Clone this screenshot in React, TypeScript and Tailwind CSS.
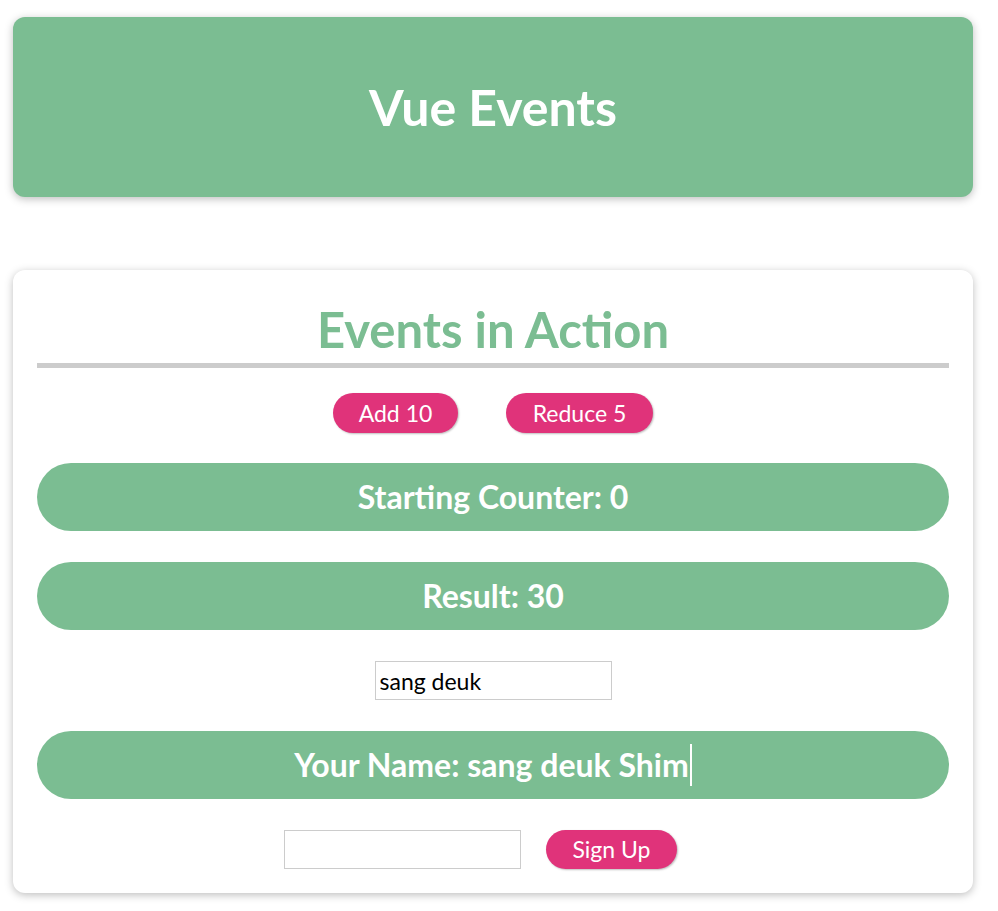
import React from "react";

export default function App() {
  const font = { fontFamily: "Lato, 'Noto Sans', sans-serif" };
  const bar =
    "h-[68px] rounded-full bg-[#7bbd92] text-white font-bold text-[32px] flex items-center justify-center";
  const btn =
    "rounded-[20px] bg-[#e0337a] text-white text-[23px] shadow-[1px_1px_2px_rgba(0,0,0,0.26)]";
  return (
    <div className="min-h-[911px] bg-white pt-[17px] pb-[18px]" style={font}>
      <header className="ml-[13px] mr-[25px] h-[180px] rounded-[12px] bg-[#7bbd92] shadow-[0_2px_8px_rgba(0,0,0,0.26)] flex items-center justify-center">
        <h1 className="text-white font-bold text-[50px] leading-none">Vue Events</h1>
      </header>
      <section className="ml-[13px] mr-[25px] mt-[73px] rounded-[12px] bg-white shadow-[0_2px_8px_rgba(0,0,0,0.26)] px-[24px] pt-[24px] pb-[24px] text-center">
        <h2 className="h-[74px] border-b-[5px] border-[#cccccc] text-[#7bbd92] font-bold text-[49px] leading-[70px]">
          Events in Action
        </h2>
        <div className="mt-[25px] flex justify-center gap-[48px]">
          <button className={`h-[40px] w-[125px] ${btn}`}>Add 10</button>
          <button className={`h-[40px] w-[147px] ${btn}`}>Reduce 5</button>
        </div>
        <p className={`mt-[30px] ${bar}`}>Starting Counter: 0</p>
        <p className={`mt-[31px] ${bar}`}>Result: 30</p>
        <div className="mt-[31px] flex justify-center">
          <input
            readOnly
            value="sang deuk"
            className="h-[39px] w-[237px] border border-[#cccccc] px-[4px] text-[23px] text-black outline-none"
            style={font}
          />
        </div>
        <p className={`mt-[31px] ${bar}`}>
          <span>Your Name: sang deuk Shim</span>
          <span className="inline-block w-[2px] h-[42px] bg-white ml-[1px]"></span>
        </p>
        <div className="mt-[31px] flex justify-center items-center gap-[25px] pr-[25px]">
          <input
            readOnly
            value=""
            className="h-[39px] w-[237px] border border-[#cccccc] px-[4px] text-[23px] text-black outline-none"
            style={font}
          />
          <button className={`h-[39px] w-[131px] ${btn}`}>Sign Up</button>
        </div>
      </section>
    </div>
  );
}
